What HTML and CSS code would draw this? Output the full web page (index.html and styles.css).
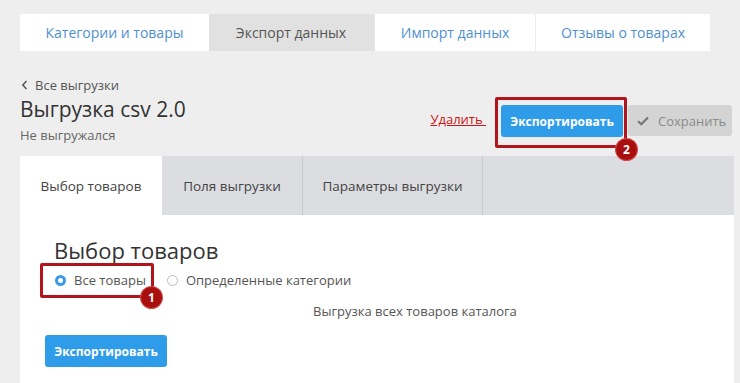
FILE: index.html
```html
<!DOCTYPE html>
<html lang="ru">
<head>
<meta charset="utf-8">
<title>Выгрузка csv 2.0</title>
<link rel="stylesheet" href="styles.css">
</head>
<body>
<div class="page">
  <nav class="top-tabs">
    <a class="top-tab t1">Категории и товары</a>
    <a class="top-tab t2 active">Экспорт данных</a>
    <a class="top-tab t3">Импорт данных</a>
    <a class="top-tab t4">Отзывы о товарах</a>
  </nav>

  <header class="head">
    <div class="head-left">
      <a class="back"><svg class="back-ico" width="7" height="10" viewBox="0 0 7 10"><path d="M5.5 1 L1.8 5 L5.5 9" fill="none" stroke="#555" stroke-width="1.5"/></svg>Все выгрузки</a>
      <h1 class="title">Выгрузка csv 2.0</h1>
      <div class="status">Не выгружался</div>
    </div>
    <div class="actions">
      <a class="delete">Удалить </a>
      <div class="mark-wrap">
        <button class="btn btn-blue">Экспортировать</button>
        <span class="mark mark-2"></span>
        <span class="badge badge-2">2</span>
      </div>
      <button class="btn btn-save"><svg class="check" width="12" height="10" viewBox="0 0 12 10"><path d="M1 5.2 L4.3 8.3 L11 1.5" fill="none" stroke="#777" stroke-width="2.2"/></svg>Сохранить</button>
    </div>
  </header>

  <section class="panel">
    <div class="panel-tabs">
      <div class="ptab active">Выбор товаров</div>
      <div class="ptab sep">Поля выгрузки</div>
      <div class="ptab sep wide">Параметры выгрузки</div>
    </div>
    <div class="panel-body">
      <h2 class="section-title">Выбор товаров</h2>
      <div class="radios">
        <label class="radio mark-wrap"><span class="dot on"></span>Все товары<span class="mark mark-1"></span><span class="badge badge-1">1</span></label>
        <label class="radio"><span class="dot"></span>Определенные категории</label>
      </div>
      <p class="desc">Выгрузка всех товаров каталога</p>
      <button class="btn btn-blue">Экспортировать</button>
    </div>
  </section>
</div>
</body>
</html>
```

FILE: styles.css
```css
* { box-sizing: border-box; }
html, body { margin: 0; }
body {
  background: #eeeeee;
  font-family: "Open Sans", "Noto Sans", sans-serif;
  color: #333;
  width: 740px;
  height: 383px;
  overflow: hidden;
}
.page { padding: 14px 6px 0 20px; }

.top-tabs { display: flex; height: 37px; }
.top-tab {
  display: flex; align-items: center; justify-content: center;
  background: #fff; color: #4f90cf; font-size: 14px;
}
.top-tab.t1 { width: 189px; }
.top-tab.t2 { width: 164px; background: #e1e1e1; color: #555; }
.top-tab.t3 { width: 162px; border-left: 2px solid #e4e4e4; }
.top-tab.t4 { width: 175px; border-left: 1px solid #ececec; }

.head { display: flex; justify-content: space-between; margin-top: 25px; }
.head-left { display: flex; flex-direction: column; }
.back { display: flex; align-items: center; font-size: 13px; line-height: 18px; color: #555; padding-left: 1px; }
.back-ico { margin-right: 7px; }
.title { margin: 0; font-size: 21px; font-weight: 400; line-height: 30px; color: #333; }
.status { font-size: 13px; line-height: 18px; color: #666; margin-top: 2px; }

.actions { display: flex; align-items: flex-start; padding-top: 29px; margin-right: 2px; }
.delete {
  color: #cc1515; font-size: 13px; text-decoration: underline;
  margin-top: 5px; margin-right: 15px; white-space: pre;
}
.mark-wrap { position: relative; }
.btn {
  font-family: "Open Sans", sans-serif; font-weight: 700; font-size: 12px;
  border: 0; border-radius: 3px; cursor: pointer; padding: 0;
}
.btn-blue { background: #2f9ce9; color: #fff; width: 122px; height: 32px; display: block; }
.btn-save {
  display: flex; align-items: center; margin-left: 5px;
  width: 104px; height: 31px; background: #d4d4d4; color: #8a8a8a;
  font-weight: 400; font-size: 13px; padding-left: 9px;
}
.check { margin-right: 9px; }

.mark { position: absolute; border: 3px solid #b1141b; border-radius: 2px; pointer-events: none; }
.mark-2 { left: -6px; top: -8px; width: 132px; height: 51px; }
.mark-1 { left: -15px; top: -8px; width: 114px; height: 35px; }
.badge {
  position: absolute; width: 21px; height: 21px; border-radius: 50%;
  background: #a90f0f; color: #fff; font-size: 12px; font-weight: 700;
  display: flex; align-items: center; justify-content: center;
  box-shadow: 0 0 0 1px #d04a4a;
}
.badge-2 { left: 115px; top: 34px; }
.badge-1 { left: 86px; top: 16px; }

.panel { margin-top: 12px; background: #fff; }
.panel-tabs { display: flex; height: 59px; background: #dcdde0; }
.ptab {
  display: flex; align-items: center; justify-content: center;
  font-size: 13.5px; color: #444; width: 140px; position: relative;
}
.ptab.active { background: #fff; width: 142px; }
.ptab.wide { width: 181px; }
.ptab.sep + .ptab.sep { border-left: 1px solid #c9cacd; }
.ptab.wide { border-right: 1px solid #c9cacd; }

.panel-body { padding: 20px 0 20px 25px; }
.section-title { margin: 0 0 0 9px; font-size: 22px; font-weight: 400; line-height: 30px; color: #333; }
.radios { display: flex; margin-top: 5px; height: 20px; align-items: center; padding-left: 10px; }
.radio { display: flex; align-items: center; font-size: 13px; color: #555; margin-right: 21px; }
.dot {
  width: 11px; height: 11px; border-radius: 50%; border: 1px solid #bbb; background: #fff;
  margin-right: 8px; flex: none;
}
.dot.on { border: 3px solid #3d99e6; background: #fff; }
.desc { margin: 12px 0 15px 268px; font-size: 13px; line-height: 18px; color: #555; }
```
